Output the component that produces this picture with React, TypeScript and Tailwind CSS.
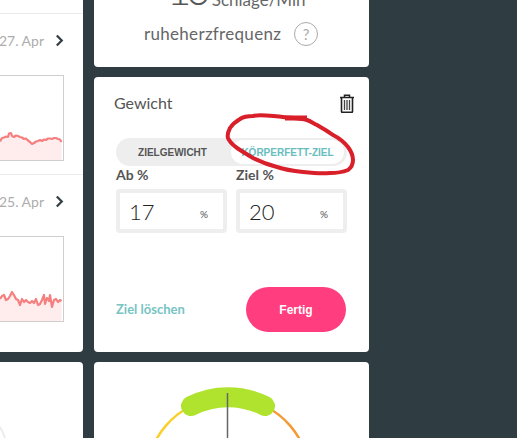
import { useMemo } from 'react';

const lineA = [
  [0, 141.5], [2, 138], [4, 137.5], [6, 136.5], [8, 137], [9, 133.5], [11, 133], [12, 136], [14, 137], [16, 135.5], [18, 136], [20, 137], [22, 137.5], [24, 139], [26, 138.5], [28, 140.5], [30, 142], [32, 144], [34, 143], [36, 141.5], [38, 141], [40, 140], [42, 141], [44, 139.5], [46, 140], [48, 138.5], [50, 138.5], [52, 139], [54, 138], [56, 138], [58, 139], [60, 139.5], [61.5, 142],
];

const lineB = [
  [0, 299], [2, 296], [4, 295], [6, 300], [8, 299], [10, 296], [12, 292], [14, 295], [16, 299], [18, 300], [20, 305], [22, 299], [24, 302], [26, 300], [28, 302], [30, 303], [32, 301], [34, 303], [36, 299], [38, 305], [40, 304], [42, 300], [44, 295], [45, 304], [47, 298], [49, 301], [50, 295], [52, 307], [54, 300], [56, 299], [58, 302], [60, 300], [61.5, 301],
];

function Chart({ points, top, bottom }: { points: number[][]; top: number; bottom: number }) {
  const line = useMemo(() => points.map((p) => p.join(',')).join(' '), [points]);
  const area = `0,${bottom} ${line} 61.5,${bottom}`;
  return (
    <div className="h-[86px] w-[64px] border border-l-0 border-[#cfcfcf] bg-white">
      <svg viewBox={`0 ${top} 63 84`} className="block h-[84px] w-[63px]">
        <polygon points={area} fill="#ffecec" />
        <polyline points={line} fill="none" stroke="#f57f7f" strokeWidth="2.2" strokeLinejoin="round" />
      </svg>
    </div>
  );
}

function DayRow({ date, points, top, bottom }: { date: string; points: number[][]; top: number; bottom: number }) {
  return (
    <div className="h-[161px] border-t border-[#ececec] pt-[17px]">
      <div className="flex h-[18px] items-center justify-end pr-[19px]">
        <span className="shrink-0 text-[14px] whitespace-nowrap text-[#adadad]">{date}</span>
        <svg viewBox="0 0 10 14" className="ml-[11px] h-[13px] w-[9px] shrink-0">
          <path d="M2 1.5 7.5 7 2 12.5" fill="none" stroke="#333f45" strokeWidth="2.5" />
        </svg>
      </div>
      <div className="mt-[26px]">
        <Chart points={points} top={top} bottom={bottom} />
      </div>
    </div>
  );
}

function PercentInput({ label, value }: { label: string; value: string }) {
  return (
    <div className="w-[111px]">
      <div className="h-[23px] text-[14px] leading-[17px] font-bold text-[#555]">{label}</div>
      <div className="flex h-[44px] items-center rounded-[4px] border-4 border-[#eeeeee] pr-[15px] pl-[9px]">
        <span className="text-[22px] font-light text-[#222]">{value}</span>
        <span className="mt-[7px] ml-auto text-[10px] text-[#555]">%</span>
      </div>
    </div>
  );
}

export default function App() {
  return (
    <div className="flex h-[438px] w-[517px] gap-[11px] overflow-hidden bg-[#2f3d43] font-['Lato',sans-serif]">
      <div className="flex w-[83px] shrink-0 flex-col gap-[10px]">
        <div className="h-[352px] shrink-0 rounded-br-[4px] bg-white pt-[13px]">
          <DayRow date="27. Apr" points={lineA} top={76} bottom={160} />
          <DayRow date="25. Apr" points={lineB} top={237} bottom={321} />
        </div>
        <div className="flex-1 rounded-tr-[4px] bg-white">
          <svg viewBox="0 362 83 76" className="block h-[76px] w-[83px]">
            <path d="M0 427 Q3 432 5 438" fill="none" stroke="#ececec" strokeWidth="2" />
          </svg>
        </div>
      </div>

      <div className="flex w-[275px] shrink-0 flex-col gap-[10px]">
        <div className="h-[67px] shrink-0 overflow-hidden rounded-b-[4px] bg-white">
          <div className="mt-[-35px] flex h-[46px] items-end pl-[73px]">
            <span className="text-[42px] leading-[44px] font-light tracking-[-5px] text-[#555]">10</span>
            <span className="ml-[6px] text-[17px] leading-[22px] text-[#666]">Schläge/Min</span>
          </div>
          <div className="mt-[10px] flex items-center pl-[50px]">
            <span className="text-[17px] tracking-[0.3px] text-[#666]">ruheherzfrequenz</span>
            <span className="ml-[13px] flex h-[24px] w-[24px] items-center justify-center rounded-full border border-[#aaa] text-[15px] text-[#aaa]">
              ?
            </span>
          </div>
        </div>

        <div className="relative h-[275px] shrink-0 rounded-[4px] bg-white px-[22px]">
          <div className="flex items-center justify-between pt-[14px]">
            <span className="-ml-[2px] text-[16px] text-[#555]">Gewicht</span>
            <svg viewBox="0 0 16 19" className="mr-[-8px] h-[19px] w-[16px]">
              <path d="M1 3.5h14M5.5 3V1.2h5V3" fill="none" stroke="#222" strokeWidth="1.5" />
              <path d="M2.5 4v13.5a.8.8 0 0 0 .8.8h9.4a.8.8 0 0 0 .8-.8V4" fill="none" stroke="#222" strokeWidth="1.6" />
              <path d="M5.5 6v10M8 6v10M10.5 6v10" fill="none" stroke="#444" strokeWidth="1.3" />
            </svg>
          </div>

          <div className="mt-[23px] flex h-[28px] w-[231px] items-center rounded-full bg-[#eeeeee] font-['Liberation_Sans',sans-serif] text-[10px] font-bold">
            <span className="w-[113px] text-center text-[#555]">ZIELGEWICHT</span>
            <span className="flex h-[28px] w-[117px] items-center justify-center rounded-full border-2 border-[#eeeeee] bg-white text-[#68bdbd]">
              KÖRPERFETT-ZIEL
            </span>
          </div>

          <div className="flex gap-[9px]">
            <PercentInput label="Ab %" value="17" />
            <PercentInput label="Ziel %" value="20" />
          </div>

          <div className="mt-[54px] flex items-center justify-between pr-[1px]">
            <span className="text-[13px] font-bold text-[#76c4c4]">Ziel löschen</span>
            <button className="h-[45px] w-[100px] rounded-full bg-[#ff3d7f] font-['Liberation_Sans',sans-serif] text-[12px] font-bold text-white">
              Fertig
            </button>
          </div>

          <svg viewBox="94 77 275 275" className="pointer-events-none absolute top-0 left-0 h-[275px] w-[275px]">
            <path
              d="M283 117C270 116 260 114 253 116C247 116 243 117 240 119C235 122 232 125 230 128C228 132 227 135 228 138C230 143 233 145 237 148C243 152 248 155 253 158C261 162 269 165 277 167C286 170 294 171 303 172C312 173 321 174 330 173C337 173 343 172 348 170C352 167 353 164 353 160C353 155 351 151 348 147C344 142 339 138 333 135C328 131 322 128 317 125C313 123 310 121 307 120C298 118 290 118 283 117"
              fill="none"
              stroke="#d81f2a"
              strokeWidth="4"
              strokeLinecap="round"
            />
            <path d="M285 118H307" fill="none" stroke="#d81f2a" strokeWidth="5" />
          </svg>
        </div>

        <div className="flex-1 rounded-t-[4px] bg-white">
          <svg viewBox="94 362 275 76" className="block h-[76px] w-[275px]">
            <path d="M191 406A82 82 0 0 0 150 454" fill="none" stroke="#fbcf2a" strokeWidth="2.5" />
            <path d="M265 406A82 82 0 0 1 306 454" fill="none" stroke="#f39a32" strokeWidth="2.5" />
            <path d="M191 406A82 82 0 0 1 265 406" fill="none" stroke="#afe32d" strokeWidth="20" strokeLinecap="round" />
            <path d="M227.5 393V438" fill="none" stroke="#666" strokeWidth="1.5" />
          </svg>
        </div>
      </div>
    </div>
  );
}
